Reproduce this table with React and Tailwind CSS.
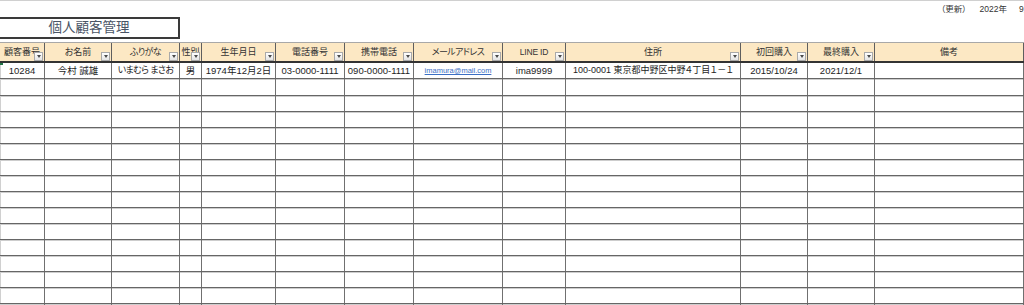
import React from "react";

const FONT =
  "font-['Liberation_Sans','Noto_Sans_CJK_JP',sans-serif] [font-feature-settings:'palt']";

const GRID =
  "grid grid-cols-[45px_67px_68px_22px_74px_69px_69px_89px_63px_175px_67px_67px_149px]";

const cols = [
  { h: "顧客番号", d: "10284" },
  { h: "お名前", d: "今村 誠雄" },
  { h: "ふりがな", d: "いまむら まさお", kana: true },
  { h: "性別", d: "男" },
  { h: "生年月日", d: "1974年12月2日" },
  { h: "電話番号", d: "03-0000-1111" },
  { h: "携帯電話", d: "090-0000-1111" },
  { h: "メールアドレス", d: "email", hkana: true },
  { h: "LINE ID", d: "ima9999", latin: true },
  { h: "住所", d: "100-0001 東京都中野区中野４丁目１－１", small: true },
  { h: "初回購入", d: "2015/10/24" },
  { h: "最終購入", d: "2021/12/1" },
  { h: "備考", d: "", nofilter: true },
];

function FilterButton() {
  return (
    <span className="absolute right-[1px] bottom-0 w-[9px] h-[9px] border border-[#a9a9a9] bg-linear-to-b from-white to-[#e4e4e4] flex items-center justify-center">
      <span className="block w-0 h-0 border-l-[2.5px] border-r-[2.5px] border-t-[3px] border-l-transparent border-r-transparent border-t-[#4a4a4a]" />
    </span>
  );
}

function HeaderRow() {
  return (
    <div
      className={`${GRID} h-[21px] bg-[#fce8c4] border-t border-[#a8a8a8] border-b-2 border-b-[#333333]`}
    >
      {cols.map((c, i) => (
        <div
          key={i}
          className="relative overflow-hidden border-r border-[#5e5e5e] flex items-center justify-center whitespace-nowrap"
        >
          <span
            className={`text-[#333333] leading-none ${
              c.latin
                ? "text-[8.5px] tracking-[-0.2px]"
                : c.kana || c.hkana
                ? "text-[9px] tracking-[-0.6px]"
                : "text-[9px]"
            }`}
          >
            {c.h}
          </span>
          {!c.nofilter && <FilterButton />}
        </div>
      ))}
    </div>
  );
}

function DataRow() {
  return (
    <div className={`${GRID} h-[16px] border-b border-[#666666]`}>
      {cols.map((c, i) => (
        <div
          key={i}
          className={`relative overflow-hidden border-r border-[#707070] flex items-center justify-center whitespace-nowrap ${
            i === 0 ? "shadow-[inset_1px_0_0_#d0d0d0]" : ""
          }`}
        >
          {i === 0 && (
            <span className="absolute left-0 top-0 w-[3px] h-[2px] bg-[#217346]" />
          )}
          {c.d === "email" ? (
            <span className="text-[7.5px] text-[#3b6fc4] underline leading-none">
              imamura@mail.com
            </span>
          ) : (
            <span
              className={`text-[#1e1e1e] leading-none ${
                c.small
                  ? "text-[9px]"
                  : c.kana
                  ? "text-[9px] tracking-[-0.6px]"
                  : "text-[9.5px]"
              }`}
            >
              {c.d}
            </span>
          )}
        </div>
      ))}
    </div>
  );
}

function EmptyRow({ tall }) {
  return (
    <div
      className={`${GRID} ${
        tall ? "h-[17px]" : "h-[16px]"
      } border-b border-[#666666] shadow-[inset_0_1px_0_#cdcdcd]`}
    >
      {cols.map((c, i) => (
        <div
          key={i}
          className={`border-r border-[#707070] ${
            i === 0 ? "shadow-[inset_1px_0_0_#d0d0d0]" : ""
          }`}
        />
      ))}
    </div>
  );
}

export default function App() {
  return (
    <div
      className={`${FONT} w-[1024px] h-[305px] overflow-hidden bg-white border-t border-[#d0d0d0]`}
    >
      <div className="h-[16px] flex items-center pl-[941px] whitespace-nowrap text-[8.5px] text-[#333333] leading-none">
        <span>（更新）</span>
        <span className="ml-[13px]">2022年</span>
        <span className="ml-[12px]">9月</span>
      </div>
      <div className="w-[180px] h-[22px] border-t-2 border-b-2 border-r-2 border-[#3a3a3a] flex items-center justify-center">
        <span className="text-[13.5px] text-[#4a5566] leading-none">個人顧客管理</span>
      </div>
      <div className="h-[3px]" />
      <HeaderRow />
      <DataRow />
      <EmptyRow tall />
      {Array.from({ length: 14 }).map((_, i) => (
        <EmptyRow key={i} />
      ))}
    </div>
  );
}
